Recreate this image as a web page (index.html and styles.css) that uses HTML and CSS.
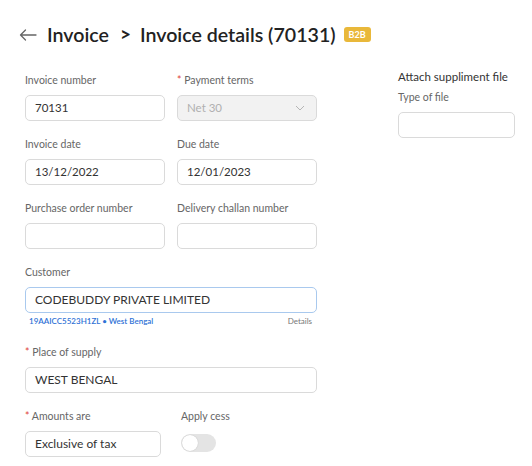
FILE: index.html
```html
<!DOCTYPE html>
<html>
<head>
<meta charset="utf-8">
<link rel="stylesheet" href="styles.css">
</head>
<body>
<div class="page">
  <header class="title">
    <svg class="back" width="18" height="12" viewBox="0 0 18 12"><path d="M17 6H1.5M6.5 1L1.5 6l5 5" fill="none" stroke="#666" stroke-width="1.3" stroke-linecap="round" stroke-linejoin="round"/></svg>
    <span class="crumb">Invoice</span>
    <span class="sep">&gt;</span>
    <span class="crumb">Invoice details (70131)</span>
    <span class="badge">B2B</span>
  </header>
  <div class="main">
    <div class="form">
      <div class="grid">
        <div class="field">
          <label class="lbl">Invoice number</label>
          <div class="input">70131</div>
        </div>
        <div class="field">
          <label class="lbl"><span class="req">*</span> Payment terms</label>
          <div class="input disabled">Net 30
            <svg class="chev" width="10" height="6" viewBox="0 0 10 6"><path d="M1 1l4 4 4-4" fill="none" stroke="#b5b5b5" stroke-width="1"/></svg>
          </div>
        </div>
        <div class="field">
          <label class="lbl">Invoice date</label>
          <div class="input">13/12/2022</div>
        </div>
        <div class="field">
          <label class="lbl">Due date</label>
          <div class="input">12/01/2023</div>
        </div>
        <div class="field">
          <label class="lbl">Purchase order number</label>
          <div class="input"></div>
        </div>
        <div class="field">
          <label class="lbl">Delivery challan number</label>
          <div class="input"></div>
        </div>
      </div>
      <div class="field customer">
        <label class="lbl">Customer</label>
        <div class="input wide focus">CODEBUDDY PRIVATE LIMITED</div>
        <div class="sub">
          <span class="gst">19AAICC5523H1ZL • West Bengal</span>
          <span class="details">Details</span>
        </div>
      </div>
      <div class="field place">
        <label class="lbl"><span class="req">*</span> Place of supply</label>
        <div class="input wide big">WEST BENGAL</div>
      </div>
      <div class="lastrow">
        <div class="field">
          <label class="lbl"><span class="req">*</span> Amounts are</label>
          <div class="input big amounts">Exclusive of tax</div>
        </div>
        <div class="field cess">
          <label class="lbl">Apply cess</label>
          <div class="toggle"><span class="knob"></span></div>
        </div>
      </div>
    </div>
    <aside class="side">
      <div class="side-title">Attach suppliment file</div>
      <label class="lbl">Type of file</label>
      <div class="input side-input"></div>
    </aside>
  </div>
</div>
</body>
</html>
```
FILE: styles.css
```css
* { box-sizing: border-box; }
body {
  margin: 0;
  background: #fff;
  font-family: "Lato", "Noto Sans", sans-serif;
  color: #333;
}
.page { padding: 22px 0 0 19px; }
.title {
  display: flex;
  align-items: center;
  height: 24px;
  font-size: 19.6px;
  font-weight: 600;
  color: #222;
}
.back { margin-right: 10px; margin-top: 1px; }
.sep { margin: 0 9px 0 11px; font-size: 19px; font-weight: 700; position: relative; top: -1px; }
.badge {
  margin-left: 8px;
  background: #e9b83a;
  color: #fff;
  font-size: 9px;
  font-weight: 700;
  border-radius: 3px;
  padding: 0 5px;
  height: 15px;
  line-height: 15px;
}
.main {
  display: flex;
  margin-top: 27px;
  padding-left: 6px;
}
.form { width: 292px; }
.grid {
  display: grid;
  grid-template-columns: 140px 140px;
  column-gap: 12px;
  row-gap: 16px;
}
.field { display: flex; flex-direction: column; }
.lbl {
  display: block;
  font-size: 10.5px;
  line-height: 14px;
  color: #666;
  margin-bottom: 8px;
  white-space: nowrap;
}
.req { color: #e0453a; }
.input {
  height: 26px;
  border: 1px solid #dadada;
  border-radius: 5px;
  background: #fff;
  font-size: 11.5px;
  line-height: 24px;
  padding: 0 9px;
  color: #333;
  display: flex;
  align-items: center;
  justify-content: space-between;
}
.input.disabled { background: #f2f2f2; color: #b0b0b0; }
.chev { margin-right: 2px; }
.customer { margin-top: 16px; }
.input.wide { width: 292px; }
.input.big { font-size: 12px; }
.input.focus { border-color: #a9c9ee; font-size: 12px; }
.sub {
  display: flex;
  justify-content: space-between;
  font-size: 8px;
  line-height: 10px;
  margin-top: 3px;
  padding: 0 5px 0 4px;
}
.gst { color: #2f72d6; font-weight: 600; }
.details { color: #777; }
.place { margin-top: 19px; }
.lastrow { display: flex; margin-top: 16px; }
.amounts { width: 136px; }
.cess { margin-left: 20px; }
.toggle {
  margin-top: 3px;
  width: 35px;
  height: 18px;
  border-radius: 9px;
  background: #e4e4e4;
  position: relative;
}
.knob {
  position: absolute;
  left: 1px;
  top: 1px;
  width: 16px;
  height: 16px;
  border-radius: 50%;
  background: #fff;
  box-shadow: 0 0 1px rgba(0,0,0,0.25);
}
.side { margin-left: 81px; margin-top: -3px; }
.side-title { font-size: 11.5px; line-height: 14px; color: #333; margin-bottom: 6px; }
.side-input { width: 117px; }
```
